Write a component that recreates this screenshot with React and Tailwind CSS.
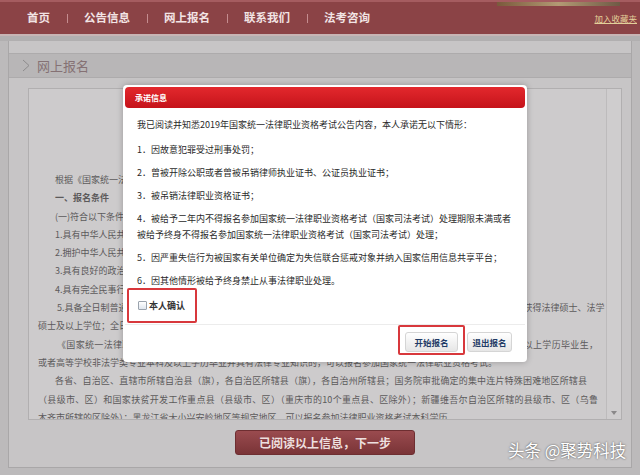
export default function App() {
  const navItems = ["首页", "公告信息", "网上报名", "联系我们", "法考咨询"];
  return (
    <div className="relative w-[640px] h-[475px] overflow-hidden bg-[#bcbabb] font-['Noto_Sans_CJK_SC',sans-serif]">
      {/* top nav */}
      <div className="relative h-[34px] bg-[#8b4346] border-t-2 border-[#a55c60] flex items-center pl-[27px] pr-[3px]">
        <div className="absolute top-0 left-[497px] w-[123px] h-[4px] bg-gradient-to-r from-[#7a5a3c] via-[#b39a74] to-[#6f5a45]" />
        <div className="flex items-center gap-[16.5px] text-[11.5px] font-bold text-[#f2e4e4] leading-none">
          {navItems.map((t, i) => (
            <div key={t} className="flex items-center gap-[16.5px]">
              <span>{t}</span>
              {i < navItems.length - 1 && <span className="w-px h-[9px] bg-[#c58c8f]" />}
            </div>
          ))}
        </div>
        <span className="ml-auto text-[8.5px] underline text-[#e3d09a] leading-none">加入收藏夹</span>
      </div>
      <div className="h-[2px] bg-[#c7b4b4]" />
      <div className="h-[5px] bg-[#b1afb0]" />

      {/* panel */}
      <div className="mx-[8px] h-[427px] bg-[#c7c5c6] border-x border-[#a9a7a8] border-b pt-[12px] flex flex-col">
        <div className="h-[25px] bg-[#b8b6b7] border-y border-[#adabac] flex items-center pl-[13px] gap-[7px]">
          <svg width="8" height="13" viewBox="0 0 8 13">
            <polyline points="1,1 7,6.5 1,12" fill="none" stroke="#8e8c8d" strokeWidth="1" />
          </svg>
          <span className="text-[13px] text-[#857174] leading-none">网上报名</span>
        </div>

        <div className="ml-[19px] mr-[9px] mt-[10px] h-[332px] bg-[#cdcbcc] border border-[#b1afb0] flex overflow-hidden">
          <div className="flex-1 pl-[9px] pt-[82px] text-[9px] leading-[18.3px] text-[#5c5a5b] whitespace-nowrap overflow-hidden">
            <div className="pl-[17px]">根据《国家统一法律职业资格考试实施办法》，司法部公告2019年国家统一法律职业资格考试有关事项如下：</div>
            <div className="pl-[17px] font-bold">一、报名条件</div>
            <div className="pl-[17px]">(一)符合以下条件的人员，可以报名参加国家统一法律职业资格考试：</div>
            <div className="pl-[17px]">1.具有中华人民共和国国籍；</div>
            <div className="pl-[17px]">2.拥护中华人民共和国宪法，享有选举权和被选举权；</div>
            <div className="pl-[17px]">3.具有良好的政治、业务素质和道德品行；</div>
            <div className="pl-[17px]">4.具有完全民事行为能力；</div>
            <div className="ml-[19px] w-[541px] text-justify [text-align-last:justify]">5.具备全日制普通高等学校法学类本科学历并获得学士及以上学位；全日制普通高等学校非法学类本科及以上学历，并获得法律硕士、法学</div>
            <div>硕士及以上学位；全日制普通高等学校非法学类本科及以上学历并获得相应学位且从事法律工作满三年。</div>
            <div className="ml-[19px] w-[541px] text-justify [text-align-last:justify]">《国家统一法律职业资格考试实施办法》施行前已取得学历，从事法律工作满三年的高等学校非法学类专业本科及以上学历毕业生，</div>
            <div>或者高等学校非法学类专业本科及以上学历毕业并具有法律专业知识的，可以报名参加国家统一法律职业资格考试。</div>
            <div className="ml-[17px] w-[532px] text-justify [text-align-last:justify]">各省、自治区、直辖市所辖自治县（旗），各自治区所辖县（旗），各自治州所辖县；国务院审批确定的集中连片特殊困难地区所辖县</div>
            <div className="w-[560px] text-justify [text-align-last:justify]">（县级市、区）和国家扶贫开发工作重点县（县级市、区）（重庆市的10个重点县、区除外）；新疆维吾尔自治区所辖的县级市、区（乌鲁</div>
            <div>木齐市所辖的区除外）；黑龙江省大小兴安岭地区等规定地区，可以报名参加法律职业资格考试本科学历</div>
          </div>
          <div className="w-[15px] border-l border-[#bdbbbc] bg-[#cfcdce] flex flex-col justify-end items-center pb-[4px]">
            <svg width="6" height="4" viewBox="0 0 6 4">
              <polygon points="0,0 6,0 3,4" fill="#8a8889" />
            </svg>
          </div>
        </div>

        <button className="ml-[226px] mt-[10px] w-[180px] h-[25px] rounded-[3px] border border-[#6e2e31] bg-gradient-to-b from-[#9a4b4f] to-[#7a3437] text-[12px] font-bold text-[#eddfdf] leading-none flex items-center justify-center">
          已阅读以上信息，下一步
        </button>
      </div>

      {/* watermark */}
      <div className="absolute left-[508px] top-[442px] text-[16.5px] leading-none text-white [text-shadow:0_0_2px_rgba(0,0,0,0.7)] whitespace-nowrap">
        头条 @聚势科技
      </div>

      {/* modal */}
      <div className="absolute left-[123px] top-[85px] w-[404px] h-[277px] bg-white rounded-[4px] p-[2px] shadow-[0_0_6px_rgba(0,0,0,0.25)] flex flex-col">
        <div className="h-[21px] shrink-0 rounded-[4px] bg-gradient-to-b from-[#e3282d] to-[#c5121a] flex items-center pl-[10px]">
          <span className="text-[8px] font-bold text-white leading-none">承诺信息</span>
        </div>
        <div className="px-[12px] pt-[9px] text-[9px] leading-[16px] text-[#2a2a2a] whitespace-nowrap">
          <p className="mb-[9px]">我已阅读并知悉2019年国家统一法律职业资格考试公告内容，本人承诺无以下情形：</p>
          <p className="mb-[7px]">1．因故意犯罪受过刑事处罚；</p>
          <p className="mb-[7px]">2．曾被开除公职或者曾被吊销律师执业证书、公证员执业证书；</p>
          <p className="mb-[7px]">3．被吊销法律职业资格证书；</p>
          <p className="mb-[7px]">4．被给予二年内不得报名参加国家统一法律职业资格考试（国家司法考试）处理期限未满或者<br />被给予终身不得报名参加国家统一法律职业资格考试（国家司法考试）处理；</p>
          <p className="mb-[7px]">5．因严重失信行为被国家有关单位确定为失信联合惩戒对象并纳入国家信用信息共享平台；</p>
          <p>6．因其他情形被给予终身禁止从事法律职业处理。</p>
          <div className="-ml-[10px] -mt-[1px] w-[70px] h-[35px] border-2 border-[#d8383c] rounded-[2px] flex items-center pl-[9px] gap-[2px]">
            <span className="w-[9px] h-[9px] border border-[#9aa3ad] bg-gradient-to-b from-[#ffffff] to-[#dfe6ee] rounded-[1px]" />
            <span className="text-[9px] font-semibold text-[#333]">本人确认</span>
          </div>
        </div>
        <div className="mt-[1px] border-t border-[#ececec] flex justify-end items-start pr-[13px] gap-[2px]">
          <div className="h-[30px] border-2 border-[#d8383c] rounded-[2px] px-[5px] pt-[5px] flex items-start">
            <button className="block h-[20px] w-[53px] rounded-[3px] border border-[#d5d5d5] bg-gradient-to-b from-[#ffffff] to-[#e6e6e6] text-[8.5px] font-bold text-[#1f3b66] leading-none">开始报名</button>
          </div>
          <button className="block mt-[7px] h-[20px] w-[45px] rounded-[3px] border border-[#d5d5d5] bg-gradient-to-b from-[#ffffff] to-[#e6e6e6] text-[8.5px] font-bold text-[#1f3b66] leading-none">退出报名</button>
        </div>
      </div>
    </div>
  );
}
